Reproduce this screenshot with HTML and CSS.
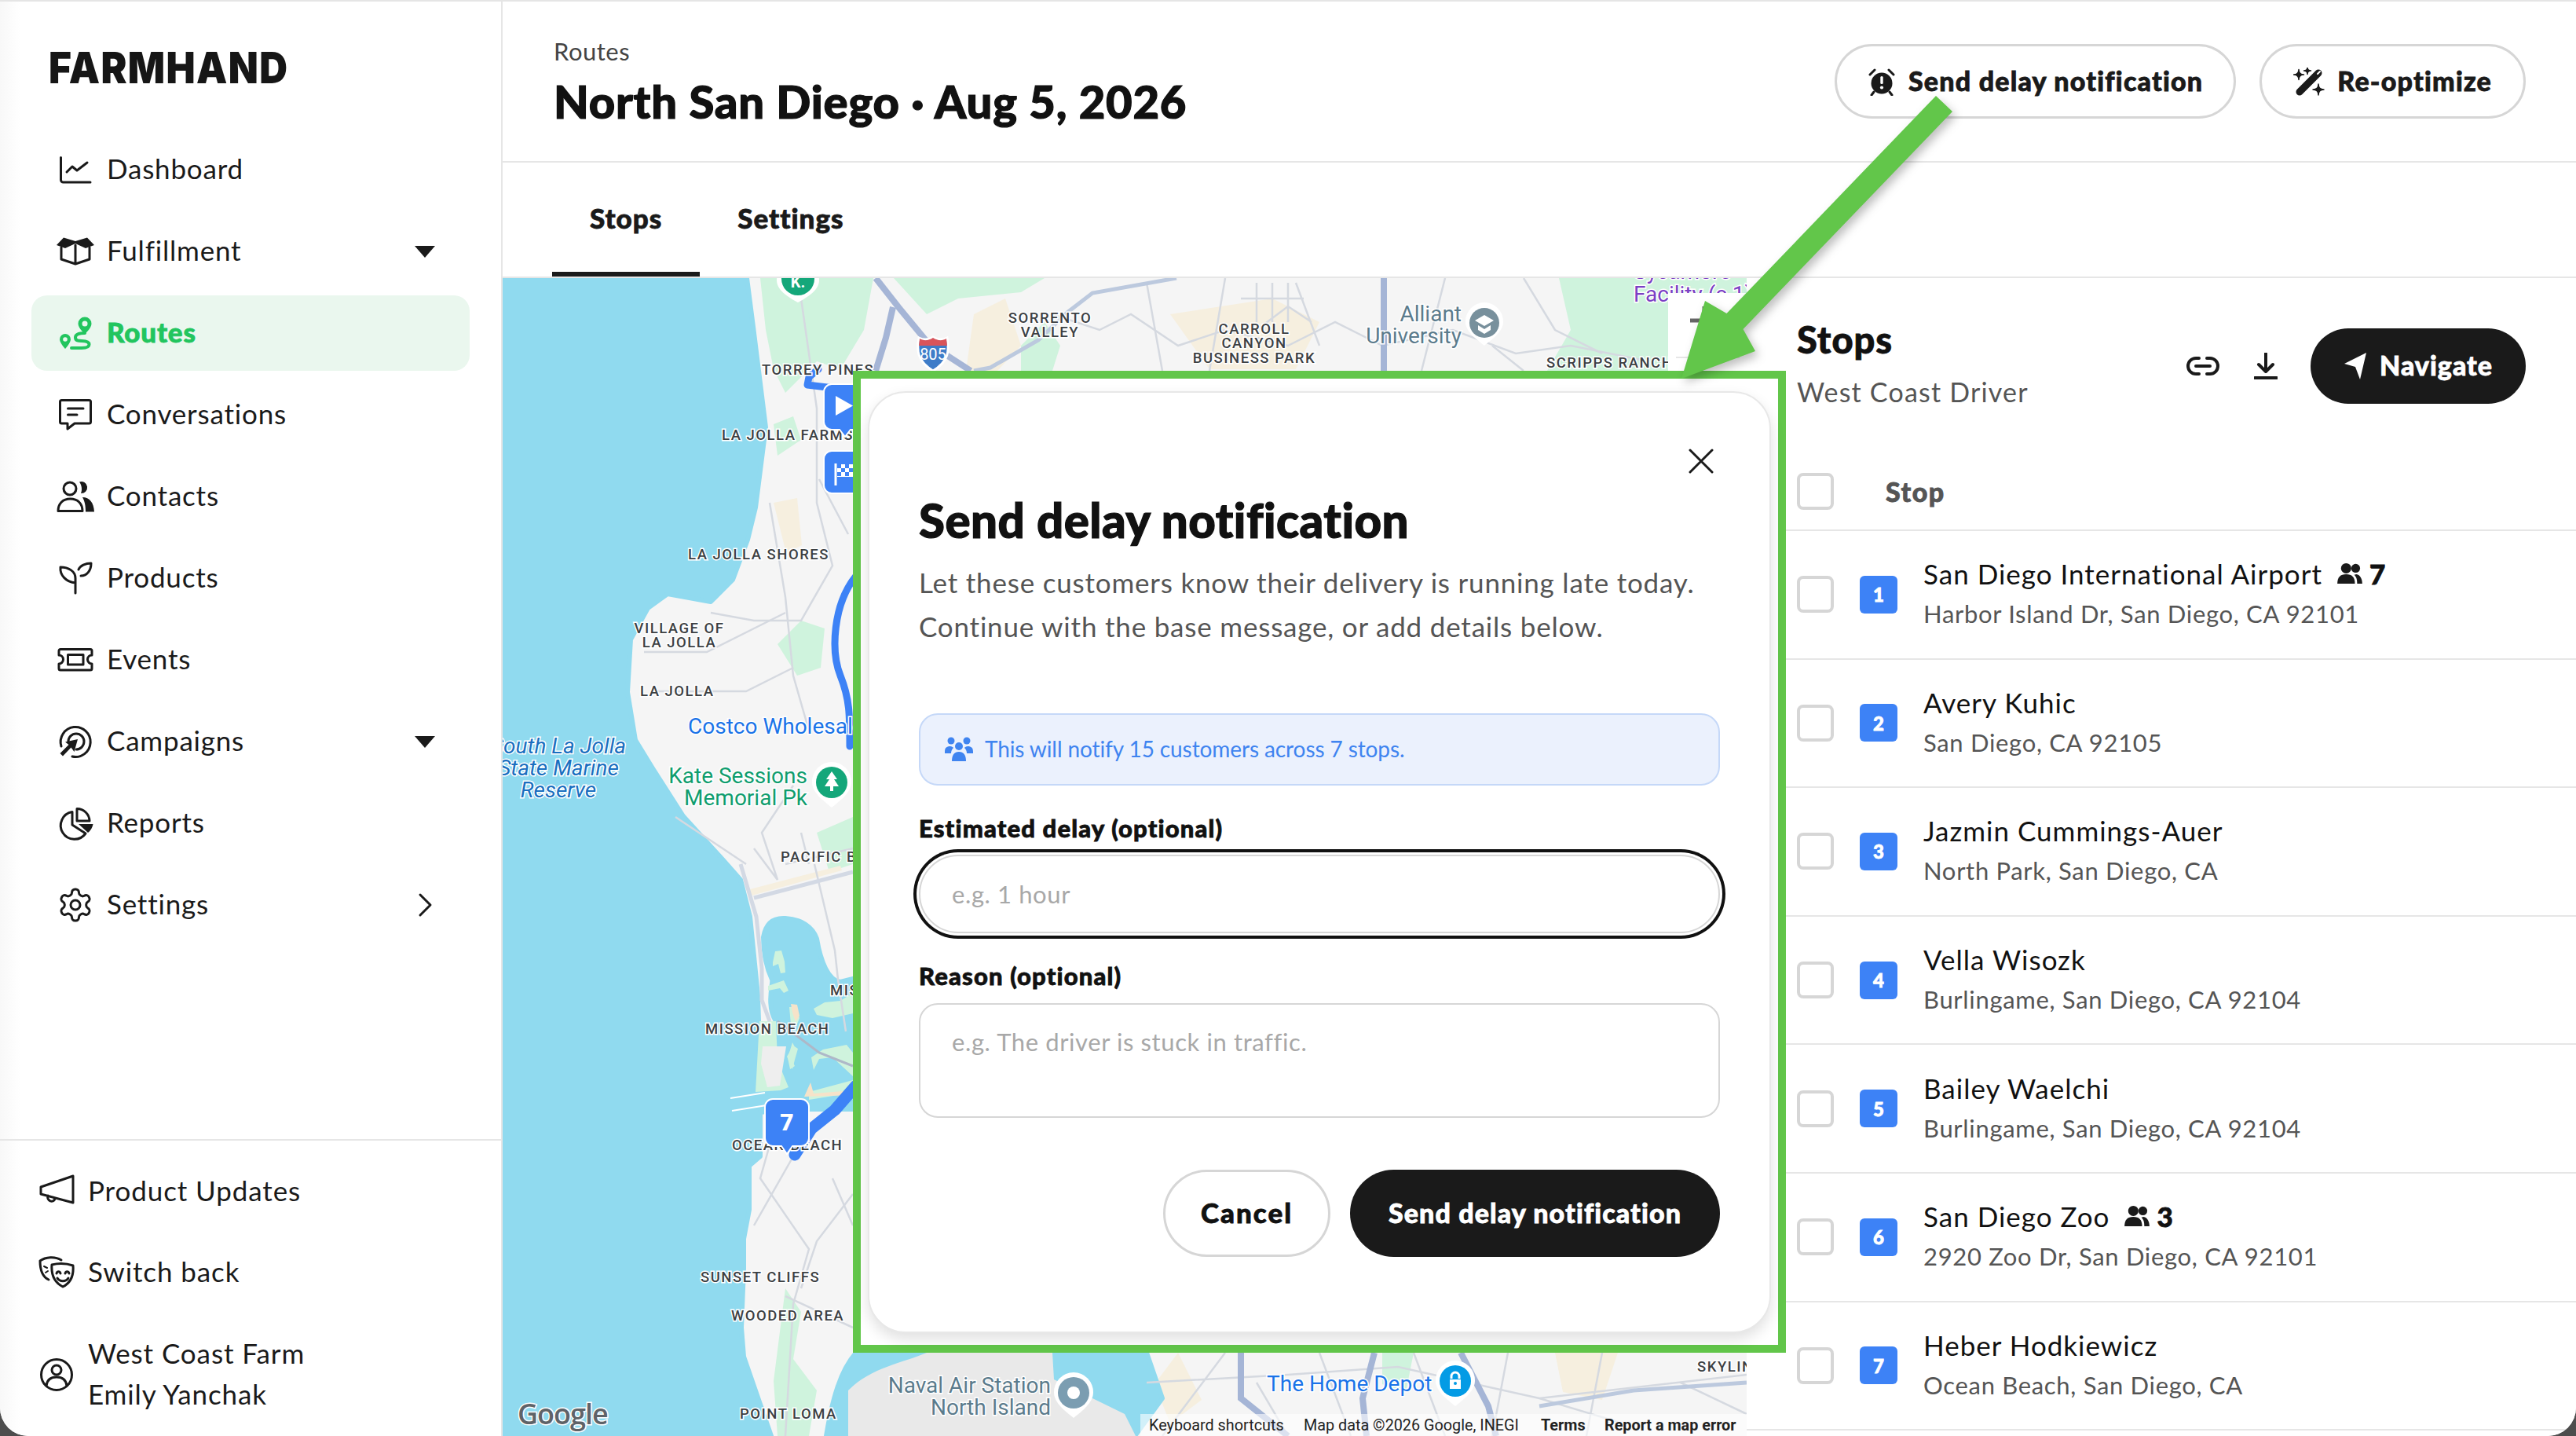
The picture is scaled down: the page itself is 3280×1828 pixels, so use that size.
FILE: index.html
```html
<!DOCTYPE html>
<html>
<head>
  <title>Farmhand - Routes</title>
  <link rel="stylesheet" href="styles.css">
</head>
<body>
<div class="app">

  <!-- sidebar -->
  <aside class="sidebar">
    <div class="logo">FARMHAND</div>
    <nav class="nav">
      <a class="nav-item">
        <svg class="icon" viewBox="0 0 48 48"><path class="st" d="M5.500 8.500V37a3 3 0 0 0 3 3H43"/><path class="st" d="M13 27l7-7 6 5 13-10"/></svg>
        <span>Dashboard</span>
      </a>
      <a class="nav-item">
        <svg class="icon" viewBox="0 0 48 48"><path class="fl" d="M0 16L9 6.500 24 11 39 6.500 48 16 37 20 24 14 11 20z"/><path class="st" d="M6 19v15l18 6 18-6V19M24 16v24"/></svg>
        <span>Fulfillment</span>
        <i class="caret"></i>
      </a>
      <a class="nav-item active">
        <svg class="icon" viewBox="0 0 48 48"><path class="gr" d="M36 3.500a8.500 8.500 0 0 1 8.500 8.500C44.500 18 36 25 36 25S27.500 18 27.500 12A8.500 8.500 0 0 1 36 3.500z"/><circle cx="36" cy="12" r="3.500" fill="#eaf7ee"/><path class="gr" d="M11 25a7 7 0 0 1 7 7c0 4.500-7 12-7 12S4 36.500 4 32a7 7 0 0 1 7-7z"/><circle cx="11" cy="32" r="2.800" fill="#eaf7ee"/><path class="gr-st" d="M36 24c-5 0-12 1-12 5.500S28 34 32 34s9.500 1 9.500 4.500S37 43 32 43H19"/></svg>
        <span>Routes</span>
      </a>
      <a class="nav-item">
        <svg class="icon" viewBox="0 0 48 48"><path class="st" d="M6.500 5.500h35a2 2 0 0 1 2 2V33a2 2 0 0 1-2 2H23l-9 7v-7H6.500a2 2 0 0 1-2-2V7.500a2 2 0 0 1 2-2z"/><path class="st" d="M14.500 16H34M14.500 24H26"/></svg>
        <span>Conversations</span>
      </a>
      <a class="nav-item">
        <svg class="icon" viewBox="0 0 48 48"><circle class="st" cx="17" cy="14" r="8"/><path class="fl" d="M29 5.500a7.500 7.500 0 1 1 2 14.500c2-4 1-11-2-14.500z"/><path class="st" d="M2 42.500C2 33 8 27 17.500 27S33 33 33 42.500z"/><path class="fl" d="M33 25c9 0 14.500 7 15 18.500H37c0-8-1-13-4-18.500z"/></svg>
        <span>Contacts</span>
      </a>
      <a class="nav-item">
        <svg class="icon" viewBox="0 0 48 48"><path class="st" d="M24 43V24C24 15 15 10 5 10 4 20 12 29 24 30"/><path class="st" d="M31 21c8 0 13-7 13-16-7 0-14 3-16 8"/></svg>
        <span>Products</span>
      </a>
      <a class="nav-item">
        <svg class="icon" viewBox="0 0 48 48"><path class="st" d="M5 10.500h38a2 2 0 0 1 2 2V18a5.500 5.500 0 0 0 0 11v6a2 2 0 0 1-2 2H5a2 2 0 0 1-2-2v-6a5.500 5.500 0 0 0 0-11v-5.500a2 2 0 0 1 2-2z"/><rect class="st" x="14.500" y="17.500" width="19.500" height="12.500"/></svg>
        <span>Events</span>
      </a>
      <a class="nav-item">
        <svg class="icon" viewBox="0 0 48 48"><path class="st" d="M6 30A19 19 0 1 1 20 43"/><path class="st" d="M15 24a10 10 0 1 1 10 10"/><path class="fl" d="M27 21l-4.500 16-4-5.500L8 42.500 4.500 39 15.500 28 11 24.500z"/></svg>
        <span>Campaigns</span>
        <i class="caret"></i>
      </a>
      <a class="nav-item">
        <svg class="icon" viewBox="0 0 48 48"><path class="st" d="M20 9.500A17.500 17.500 0 1 0 37 37L20 26z"/><path class="st" d="M26 5.500A16 16 0 0 1 42 21H26z"/><path class="fl" d="M28 25h18.500a18 18 0 0 1-6.500 11z"/></svg>
        <span>Reports</span>
      </a>
      <a class="nav-item">
        <svg class="icon" viewBox="0 0 24 24"><path class="st-s" d="M12.220 2h-.44a2 2 0 0 0-2 2v.18a2 2 0 0 1-1 1.730l-.43.25a2 2 0 0 1-2 0l-.15-.08a2 2 0 0 0-2.730.73l-.22.38a2 2 0 0 0 .73 2.730l.15.1a2 2 0 0 1 1 1.720v.51a2 2 0 0 1-1 1.740l-.15.09a2 2 0 0 0-.73 2.730l.22.38a2 2 0 0 0 2.730.73l.15-.08a2 2 0 0 1 2 0l.43.25a2 2 0 0 1 1 1.730V20a2 2 0 0 0 2 2h.44a2 2 0 0 0 2-2v-.18a2 2 0 0 1 1-1.730l.43-.25a2 2 0 0 1 2 0l.15.08a2 2 0 0 0 2.730-.73l.22-.39a2 2 0 0 0-.73-2.730l-.15-.08a2 2 0 0 1-1-1.740v-.5a2 2 0 0 1 1-1.740l.15-.09a2 2 0 0 0 .73-2.730l-.22-.38a2 2 0 0 0-2.730-.73l-.15.08a2 2 0 0 1-2 0l-.43-.25a2 2 0 0 1-1-1.730V4a2 2 0 0 0-2-2z"/><circle class="st-s" cx="12" cy="12" r="3"/></svg>
        <span>Settings</span>
        <svg class="chev" viewBox="0 0 20 32"><path class="st" d="M3 3l13 13L3 29"/></svg>
      </a>
    </nav>
    <div class="side-foot">
      <a class="foot-item">
        <svg class="icon" viewBox="0 0 48 48"><path class="st" d="M45 4v34L4 27v-9zM13 29c-2 7 7 10 9 4"/></svg>
        <span>Product Updates</span>
      </a>
      <a class="foot-item">
        <svg class="icon" viewBox="0 0 48 48"><path class="st" d="M30 8C22 3 10 4 3 9c0 10 2 20 11 24"/><path class="st" d="M18 14c8-2 18-2 27 1 1 12-3 22-13 27-10-5-15-15-14-28z"/><path class="st" d="M24 25c1-3 4-3 5 0M35 25c1-3 4-3 5 0M25 31c3 5 11 5 14 0"/><path class="st-t" d="M8 16l4 2M10 24l3-2"/></svg>
        <span>Switch back</span>
      </a>
      <a class="foot-item account">
        <svg class="icon" viewBox="0 0 48 48"><circle class="st" cx="24" cy="24" r="19.500"/><circle class="st" cx="24" cy="18" r="6"/><path class="st" d="M11 38c1-8 6-11 13-11s12 3 13 11"/></svg>
        <div class="account-text">
          <div>West Coast Farm</div>
          <div>Emily Yanchak</div>
        </div>
      </a>
    </div>
  </aside>

  <!-- main column -->
  <main class="main">
    <header class="topbar">
      <div class="page-title">
        <div class="crumb">Routes</div>
        <h1>North San Diego · Aug 5, 2026</h1>
      </div>
      <div class="top-actions">
        <button class="pill">
          <svg class="pill-icon" viewBox="0 0 36 36"><circle class="fl" cx="18" cy="20" r="13.500"/><path class="st" d="M3 9l6-6M33 9l-6-6M8 31l-3 4M28 31l3 4"/><rect x="16.300" y="11" width="3.400" height="10" rx="1.500" fill="#fff"/><circle cx="18" cy="25.500" r="2.100" fill="#fff"/></svg>
          <span>Send delay notification</span>
        </button>
        <button class="pill reopt">
          <svg class="pill-icon wide" viewBox="0 0 40 36"><path class="wand" d="M8 31L32 7"/><path d="M31 8l3-3" stroke="#fff" stroke-width="2" stroke-linecap="round"/><path class="fl" d="M7 2.500Q7 9 13.500 9 7 9 7 15.500 7 9 .5 9 7 9 7 2.500zM18-.5Q18 4 22.500 4 18 4 18 8.500 18 4 13.500 4 18 4 18-.5zM32 21Q32 28 39 28 32 28 32 35 32 28 25 28 32 28 32 21z" stroke="#1a1a1a" stroke-width="1.500" stroke-linejoin="round"/></svg>
          <span>Re-optimize</span>
        </button>
      </div>
    </header>

    <div class="tabs">
      <a class="tab current">Stops</a>
      <a class="tab">Settings</a>
    </div>

    <div class="content">
      <div class="map">
        <svg class="map-art" viewBox="640 354 1584 1474">
          <rect x="640" y="354" width="1584" height="1474" fill="#f5f5f5"/>

          <!-- parks and sand -->
          <g fill="#cff3dd">
            <path d="M968 354H1112L1100 420 1070 470 1040 460 1000 500 985 470 975 420z"/>
            <path d="M1138 354H1330L1300 372 1220 380 1180 400z"/>
            <path d="M1985 354H2224V472H1970L2000 420z"/>
            <path d="M1300 440l30-30 20 30-10 32h-40z"/>
            <path d="M990 820l30-30 30 10-5 50-30 10z"/>
            <path d="M985 540l25-10 10 30-30 20z"/>
            <path d="M1040 1060l46-20v60l-30 10z"/>
            <path d="M1000 1640l20 30-10 60 30 40-10 58h-40l-5-70z"/>
            <path d="M1760 1722h40l-10 50-30-10zM1120 1722h60l-10 20-40 6z"/>
          </g>
          <g fill="#f6efdf">
            <path d="M1490 400l130-20 60 30-30 60h-110z"/>
            <path d="M1240 400l40-20 20 60-30 32h-40z"/>
            <path d="M1980 1722h80l-20 60-50-10z"/>
            <path d="M985 640l30-6 6 60-20 10z"/>
            <path d="M1500 1722l30 60-40 30-20-50z"/>
            <path d="M955 1132L1070 1102 1072 1108 957 1140z"/>
          </g>

          <!-- water -->
          <path class="water" d="M640 354L951 354 959 416 975 544 962 646 952 687 933 738 905 766 850 756 825 774 803 814 799 881 809 942 831 978 870 1039 921 1095 943 1120 955 1167 965 1267 967 1333 962 1388 1000 1386 1000 1412 968 1416 968 1472 954 1484 954 1540 947 1577 947 1615 944 1690 947 1727 982 1828 640 1828z"/>
          <path class="water" d="M972 1193C975 1175 985 1168 1000 1169 1020 1170 1035 1180 1040 1195 1045 1225 1055 1248 1070 1250L1090 1245V1412L1000 1412 990 1388C990 1370 985 1340 988 1300 975 1280 985 1250 983 1247 975 1230 972 1210 972 1193z"/>
          <path class="water" d="M1052 1828C1060 1780 1070 1745 1090 1722H1460L1480 1780 1445 1828z"/>
          <path fill="#e9e9e9" d="M1180 1722H1340L1342 1756 1432 1800 1446 1828H1080V1770C1110 1740 1150 1735 1180 1722z"/>

          <!-- mission bay islands -->
          <g fill="#cff3dd">
            <path d="M967 1300L988 1300 990 1350 1004 1384 994 1388 962 1390z"/>
            <path d="M984 1225l3-14 8-1 4 14 1 14-6 1-3-12-7 3z"/>
            <path d="M978 1255l20-7 6 13-6 3-5-6-15 3z"/>
            <path d="M1009 1327l4 8-5 14 4 8-6 4-3-14z"/>
            <path d="M1002 1345l8-14 6 4-4 14-3 12z"/>
            <path d="M1033 1346l15-10 30-6 8 10v30L1060 1346 1043 1348 1036 1362z"/>
            <path d="M1036 1284l14-8 20-2 16-10V1290L1060 1296 1040 1292z"/>
            <path d="M1030 1390l56-15v16L1030 1400z"/>
            <path d="M1005 1282l9 0 4 14-4 10-7-2z"/>
          </g>
          <path d="M1007 1278l8 1 3 14-5 8-4-12z" fill="#f6e3c9"/>
          <path d="M1024 1396l8-18 4 14 50-4v6z" fill="#f6e3c9"/>
          <path d="M971 1332h30l-8 50-16 2-8-30z" fill="#eee"/>
          <path d="M930 1398l44-7M932 1414l44-7" stroke="#fff" stroke-width="2"/>

          <!-- roads -->
          <g class="roads">
            <path d="M1020 380L1040 520V640L1060 720 1020 790 960 790 905 780"/>
            <path d="M1043 610L1080 680M820 830L900 830 1000 780M829 880L950 880 1010 850"/>
            <path d="M980 640L1000 760 1010 860 1030 930M1000 1100L1086 1080M860 1040L950 1100"/>
            <path d="M1010 1000L970 1060 990 1120 960 1080M1030 1100L1020 1060"/>
            <path d="M985 1440L968 1500 1030 1590 1010 1660 1000 1828M1010 1472L960 1560M1086 1520L1040 1580 1020 1640"/>
            <path d="M1000 1650L1086 1690M1060 1500L1086 1560"/>
            <path d="M1037 1100L1063 1210 1067 1247 1077 1313"/>
            <path d="M1340 400L1400 420 1440 400 1500 440 1560 420 1640 440 1700 410 1760 440 1850 420 1930 450 2000 440 2100 460"/>
            <path d="M1460 360L1480 472M1560 354L1540 472M1650 360L1680 440M1840 354L1810 472M1900 440L1940 472M1940 354L1980 420 2040 450M1600 420l40-30 30 20M1580 380h80M1600 360v50M1620 360v50M1640 360v50"/>
            <path d="M1460 1760L1640 1750 1780 1740 1960 1780 2224 1750M1480 1828L1560 1722M1680 1722L1720 1828M1800 1722L1840 1828M1920 1722L1900 1828M2040 1722L2020 1828M2140 1760L2224 1800M1600 1760L1640 1828M1960 1780L2060 1810"/>
          </g>
          <path class="coast-road" d="M943 1100L963 1167 970 1233 970 1273 980 1300M960 1143L1086 1110"/>
          <path class="coast-road thin" d="M990 1300L1043 1340 1086 1357"/>
          <g class="highway">
            <path d="M1115 354L1144 391 1182 437 1236 472"/>
            <path d="M1137 391L1128 430 1115 472"/>
            <path d="M1762 354V472"/>
            <path d="M1580 1722L1580 1780 1640 1828"/>
            <path d="M1750 1722L1735 1780 1740 1828M1860 1722L1895 1790 1905 1828"/>
          </g>
          <path class="road-mid" d="M1498 354L1391 373 1360 397 1322 433 1261 468 1240 472"/>
          <path class="road-mid" d="M2224 1760L2080 1770 1960 1790"/>

          <!-- route line -->
          <g class="route">
            <path d="M1042 470L1030 480 1028 490 1070 495 1090 500" stroke-width="9"/>
            <path d="M1090 733C1060 770 1058 830 1070 860 1082 890 1082 910 1082 950" stroke-width="9"/>
            <path d="M1090 1382L1063 1413 1033 1437 1012 1470" stroke-width="15"/>
          </g>

          <!-- shield and pois -->
          <path d="M1170 430c6 3 12 3 18-1 6 4 12 4 18 1 3 16 2 30-18 42-20-12-21-26-18-42z" fill="#3e7cc8" stroke="#fff" stroke-width="3"/>
          <path d="M1171 431c5 3 11 3 17-1 6 4 12 4 17 1l1 9h-36z" fill="#d9545a"/>
          <text class="shield" x="1188" y="458">805</text>

          <g>
            <path class="poi-halo" d="M1016 330a27 27 0 0 1 27 27c0 14-20 24-27 28-7-4-27-14-27-28a27 27 0 0 1 27-27z"/>
            <circle cx="1016" cy="355" r="21" fill="#14a77a"/>
            <text class="pin-k" x="1016" y="366">K.</text>
            <path class="poi-halo" d="M1059 970a25 25 0 0 1 25 26c0 14-18 26-25 32-7-6-25-18-25-32a25 25 0 0 1 25-26z"/>
            <circle cx="1059" cy="996" r="20" fill="#14a77a"/>
            <path d="M1059 982l-7 10h4l-6 9h7v6h4v-6h7l-6-9h4z" fill="#fff"/>
            <path class="poi-halo" d="M1890 385a24 24 0 0 1 24 25c0 13-17 24-24 30-7-6-24-17-24-30a24 24 0 0 1 24-25z"/>
            <circle cx="1890" cy="411" r="19" fill="#78909c"/>
            <path d="M1878 408l12-7 12 7-12 7zM1882 414l8 5 8-5v6l-8 5-8-5z" fill="#fff"/>
            <path class="poi-halo" d="M1367 1747a25 25 0 0 1 25 26c0 14-18 26-25 32-7-6-25-18-25-32a25 25 0 0 1 25-26z"/>
            <circle cx="1367" cy="1773" r="20" fill="#7b9db1"/>
            <circle cx="1367" cy="1773" r="8" fill="#fff"/>
            <path class="poi-halo" d="M1853 1732a25 25 0 0 1 25 26c0 14-18 26-25 32-7-6-25-18-25-32a25 25 0 0 1 25-26z"/>
            <circle cx="1853" cy="1758" r="20" fill="#039be5"/>
            <path d="M1848 1755v-3a5 5 0 0 1 10 0v3" fill="none" stroke="#fff" stroke-width="3"/>
            <path d="M1846 1756h14v12h-14z" fill="#fff"/>
            <circle cx="1853" cy="1761" r="2" fill="#039be5"/>
          </g>

          <!-- place names -->
          <g class="area">
            <text x="1337" y="406" text-anchor="middle">SORRENTO</text>
            <text x="1337" y="424" text-anchor="middle">VALLEY</text>
            <text x="1597" y="420" text-anchor="middle">CARROLL</text>
            <text x="1597" y="438" text-anchor="middle">CANYON</text>
            <text x="1597" y="457" text-anchor="middle">BUSINESS PARK</text>
            <text x="1969" y="463">SCRIPPS RANCH</text>
            <text x="970" y="472">TORREY PINES</text>
            <text x="919" y="555">LA JOLLA FARMS</text>
            <text x="876" y="707">LA JOLLA SHORES</text>
            <text x="865" y="801" text-anchor="middle">VILLAGE OF</text>
            <text x="865" y="819" text-anchor="middle">LA JOLLA</text>
            <text x="815" y="881">LA JOLLA</text>
            <text x="994" y="1092">PACIFIC BEACH</text>
            <text x="1057" y="1262">MISSION BAY</text>
            <text x="898" y="1311">MISSION BEACH</text>
            <text x="932" y="1459">OCEAN BEACH</text>
            <text x="892" y="1627">SUNSET CLIFFS</text>
            <text x="931" y="1676">WOODED AREA</text>
            <text x="942" y="1801">POINT LOMA</text>
            <text x="2161" y="1741">SKYLINE</text>
          </g>
          <g class="poi-text">
            <text class="purple" x="2080" y="348">Sycamore</text>
            <text class="purple" x="2080" y="377">Facility (c 1)</text>
            <text class="slate" x="1861" y="402" text-anchor="end">Alliant</text>
            <text class="slate" x="1861" y="430" text-anchor="end">University</text>
            <text class="blue" x="876" y="927">Costco Wholesale</text>
            <text class="reserve" x="711" y="952" text-anchor="middle">South La Jolla</text>
            <text class="reserve" x="711" y="980" text-anchor="middle">State Marine</text>
            <text class="reserve" x="711" y="1008" text-anchor="middle">Reserve</text>
            <text class="park" x="1028" y="990" text-anchor="end">Kate Sessions</text>
            <text class="park" x="1028" y="1018" text-anchor="end">Memorial Pk</text>
            <text class="slate" x="1338" y="1766" text-anchor="end">Naval Air Station</text>
            <text class="slate" x="1338" y="1794" text-anchor="end">North Island</text>
            <text class="blue" x="1613" y="1764">The Home Depot</text>
          </g>

          <!-- stop pins -->
          <g class="stop-pin">
            <path d="M1059 489h34a10 10 0 0 1 10 10v38a10 10 0 0 1-10 10h-10l-7 9-7-9h-10a10 10 0 0 1-10-10v-38a10 10 0 0 1 10-10z"/>
            <path d="M1059 574h34a10 10 0 0 1 10 10v34a10 10 0 0 1-10 10h-34a10 10 0 0 1-10-10v-34a10 10 0 0 1 10-10z"/>
            <path d="M984 1399h36a10 10 0 0 1 10 10v40a10 10 0 0 1-10 10h-11l-7 10-7-10h-11a10 10 0 0 1-10-10v-40a10 10 0 0 1 10-10z"/>
          </g>
          <path d="M1064 504l22 12.500-22 12.500z" fill="#fff"/>
          <path d="M1064 590v28" stroke="#fff" stroke-width="3"/>
          <rect x="1066" y="591" width="20" height="16" fill="#fff"/>
          <path d="M1066 591h5v5h-5zM1076 591h5v5h-5zM1071 596h5v5h-5zM1081 596h5v5h-5zM1066 601h5v5h-5zM1076 601h5v5h-5z" fill="#3d82f6"/>
          <text class="pin-num" x="1002" y="1439">7</text>

          <!-- attribution -->
          <text class="google" x="659" y="1813">Google</text>
          <rect x="1452" y="1800" width="772" height="28" fill="#fff" opacity="0.6"/>
          <g class="attrib">
            <text x="1463" y="1821">Keyboard shortcuts</text>
            <text x="1660" y="1821">Map data ©2026 Google, INEGI</text>
            <text class="b" x="1962" y="1821">Terms</text>
            <text class="b" x="2043" y="1821">Report a map error</text>
          </g>

          
          <rect x="2124" y="373" width="101" height="110" fill="#fff"/>
          <path d="M2152 408h36M2170 390v36" stroke="#666" stroke-width="5"/>
          <path d="M2134 455h81" stroke="#e6e6e6" stroke-width="2"/>
        </svg>
      </div>

      <section class="panel">
        <div class="panel-head">
          <div>
            <h2>Stops</h2>
            <div class="driver">West Coast Driver</div>
          </div>
          <div class="panel-tools">
            <svg class="tool-link" viewBox="0 0 44 26"><path class="st-b" d="M17 3H13a10 10 0 0 0 0 20h4M27 3h4a10 10 0 0 1 0 20h-4M13 13h18"/></svg>
            <svg class="tool-down" viewBox="0 0 30 34"><path class="st-b" d="M15 1v22M6 15l9 9 9-9"/><path class="st-b" d="M1 32h28"/></svg>
            <button class="nav-btn">
              <svg class="nav-arrow" viewBox="0 0 30 36"><path d="M29 1L21 35 15 19 1 15z" fill="#fff"/></svg>
              <span>Navigate</span>
            </button>
          </div>
        </div>

        <div class="stops-head">
          <span class="check"></span>
          <span class="stops-col">Stop</span>
        </div>

        <div class="stop">
          <span class="check"></span>
          <span class="num">1</span>
          <div class="stop-text">
            <div class="stop-name">San Diego International Airport
              <span class="count">
                <svg viewBox="0 0 36 30"><circle class="fl" cx="13" cy="8" r="7"/><circle class="fl" cx="26" cy="8" r="6"/><path class="fl" d="M1 29c0-9 4-13 12-13s12 4 12 13z"/><path class="fl" d="M27 16c5 1 8 6 8 13h-7c0-6-1-9-4-12z"/></svg>7
              </span>
            </div>
            <div class="stop-addr">Harbor Island Dr, San Diego, CA 92101</div>
          </div>
        </div>
        <div class="stop">
          <span class="check"></span>
          <span class="num">2</span>
          <div class="stop-text">
            <div class="stop-name">Avery Kuhic</div>
            <div class="stop-addr">San Diego, CA 92105</div>
          </div>
        </div>
        <div class="stop">
          <span class="check"></span>
          <span class="num">3</span>
          <div class="stop-text">
            <div class="stop-name">Jazmin Cummings-Auer</div>
            <div class="stop-addr">North Park, San Diego, CA</div>
          </div>
        </div>
        <div class="stop">
          <span class="check"></span>
          <span class="num">4</span>
          <div class="stop-text">
            <div class="stop-name">Vella Wisozk</div>
            <div class="stop-addr">Burlingame, San Diego, CA 92104</div>
          </div>
        </div>
        <div class="stop">
          <span class="check"></span>
          <span class="num">5</span>
          <div class="stop-text">
            <div class="stop-name">Bailey Waelchi</div>
            <div class="stop-addr">Burlingame, San Diego, CA 92104</div>
          </div>
        </div>
        <div class="stop">
          <span class="check"></span>
          <span class="num">6</span>
          <div class="stop-text">
            <div class="stop-name">San Diego Zoo
              <span class="count">
                <svg viewBox="0 0 36 30"><circle class="fl" cx="13" cy="8" r="7"/><circle class="fl" cx="26" cy="8" r="6"/><path class="fl" d="M1 29c0-9 4-13 12-13s12 4 12 13z"/><path class="fl" d="M27 16c5 1 8 6 8 13h-7c0-6-1-9-4-12z"/></svg>3
              </span>
            </div>
            <div class="stop-addr">2920 Zoo Dr, San Diego, CA 92101</div>
          </div>
        </div>
        <div class="stop">
          <span class="check"></span>
          <span class="num">7</span>
          <div class="stop-text">
            <div class="stop-name">Heber Hodkiewicz</div>
            <div class="stop-addr">Ocean Beach, San Diego, CA</div>
          </div>
        </div>
      </section>
    </div>
  </main>

  <!-- dialog with the green callout round it -->
  <div class="callout">
    <div class="modal">
      <svg class="modal-close" viewBox="0 0 32 32"><path class="st" d="M2 2l28 28M30 2L2 30"/></svg>
      <h3>Send delay notification</h3>
      <p class="modal-text">Let these customers know their delivery is running late today.<br>Continue with the base message, or add details below.</p>
      <div class="notice">
        <svg viewBox="0 0 38 32"><g fill="#3f84f0"><circle cx="9" cy="5" r="4.500"/><circle cx="29" cy="5" r="4.500"/><circle cx="19" cy="12" r="5"/><path d="M1 19c0-5 2-7 7-7 2 0 3 1 4 2-2 2-3 4-3 7H1zM37 19c0-5-2-7-7-7-2 0-3 1-4 2 2 2 3 4 3 7h8zM10 31c0-8 3-12 9-12s9 4 9 12z"/></g></svg>
        <span>This will notify 15 customers across 7 stops.</span>
      </div>
      <label class="field-label">Estimated delay (optional)</label>
      <input class="field-input" type="text" placeholder="e.g. 1 hour">
      <label class="field-label">Reason (optional)</label>
      <textarea class="field-area" placeholder="e.g. The driver is stuck in traffic."></textarea>
      <div class="modal-actions">
        <button class="btn-cancel">Cancel</button>
        <button class="btn-send">Send delay notification</button>
      </div>
    </div>
  </div>

  <!-- annotation arrow -->
  <svg class="arrow" viewBox="0 0 3280 1828">
    <path d="M2465 122L2486 142 2219.500 419 2235 447 2141 482 2171 383 2198.500 399z" fill="#62c64a"/>
  </svg>
</div>
</body>
</html>
```

FILE: styles.css
```css
/* base */
html {
  background: #4d4d4d;
}

body {
  margin: 0;
  font-family: "Lato", "Liberation Sans", sans-serif;
  color: #1a1a1a;
}

.app {
  position: relative;
  display: flex;
  width: 3280px;
  height: 1828px;
  box-sizing: border-box;
  border-top: 2px solid #e5e5e5;
  border-radius: 0 0 36px 36px;
  background: #fff;
  overflow: hidden;
}

button {
  font-family: inherit;
  cursor: pointer;
}

/* all the heavy labels, the face only goes up to bold so thicken it a bit */
h1, h2, h3,
.nav-item.active,
.pill,
.tab,
.nav-btn,
.stops-col,
.count,
.num,
.field-label,
.btn-cancel,
.btn-send {
  font-weight: 900;
  -webkit-text-stroke: 0.8px currentColor;
}

/* svg paint helpers */
.st { fill: none; stroke: #1a1a1a; stroke-width: 3; stroke-linecap: round; stroke-linejoin: round; }
.st-s { fill: none; stroke: #1a1a1a; stroke-width: 1.5; stroke-linecap: round; stroke-linejoin: round; }
.st-t { fill: none; stroke: #1a1a1a; stroke-width: 2; stroke-linecap: round; }
.st-b { fill: none; stroke: #1a1a1a; stroke-width: 4; stroke-linecap: round; stroke-linejoin: round; }
.fl { fill: #1a1a1a; }
.gr { fill: #22c55e; }
.gr-st { fill: none; stroke: #22c55e; stroke-width: 4; stroke-linecap: round; }
.wand { fill: none; stroke: #1a1a1a; stroke-width: 9; stroke-linecap: round; }

/* sidebar */
.sidebar {
  flex: none;
  display: flex;
  flex-direction: column;
  width: 640px;
  box-sizing: border-box;
  border-right: 2px solid #e6e6e6;
  background: linear-gradient(90deg, #f8f8f8, #fff 26px);
}

.logo {
  margin: 49px 0 0 62px;
  height: 70px;
  font-family: "Inter", "Liberation Sans", sans-serif;
  font-weight: 900;
  font-size: 55px;
  line-height: 70px;
  letter-spacing: 1.500px;
  color: #161616;
  transform: scaleX(0.9);
  transform-origin: left center;
}

.nav {
  display: flex;
  flex-direction: column;
  gap: 8px;
  margin: 47px 40px 0 40px;
}

.nav-item {
  display: flex;
  align-items: center;
  gap: 16px;
  height: 96px;
  padding: 0 32px;
  border-radius: 20px;
  font-size: 35px;
  letter-spacing: 0.800px;
}

.nav-item span {
  margin-bottom: 4px;
}

.nav-item.active {
  background: #eaf7ee;
  color: #22c55e;
}

.icon {
  flex: none;
  width: 48px;
  height: 48px;
}

.caret {
  margin-left: auto;
  margin-right: 12px;
  width: 0;
  height: 0;
  border-left: 13px solid transparent;
  border-right: 13px solid transparent;
  border-top: 15px solid #1a1a1a;
}

.chev {
  margin-left: auto;
  margin-right: 14px;
  width: 20px;
  height: 32px;
}

.side-foot {
  margin-top: auto;
  padding: 13px 0 13px 48px;
  border-top: 2px solid #e6e6e6;
}

.foot-item {
  display: flex;
  align-items: center;
  gap: 16px;
  height: 103px;
  font-size: 35px;
  letter-spacing: 0.900px;
}

.foot-item span,
.account-text {
  margin-bottom: 4px;
}

.foot-item.account {
  height: 130px;
  margin-top: 14px;
}

.account-text {
  line-height: 52px;
}

/* top bar */
.main {
  flex: 1;
  display: flex;
  flex-direction: column;
  min-width: 0;
}

.topbar {
  flex: none;
  display: flex;
  justify-content: space-between;
  height: 205px;
  box-sizing: border-box;
  border-bottom: 2px solid #e6e6e6;
  padding-right: 64px;
}

.page-title {
  padding: 45px 0 0 65px;
}

.crumb {
  font-size: 31px;
  line-height: 36px;
  letter-spacing: 0.500px;
  color: #444;
}

h1 {
  margin: 10px 0 0;
  font-size: 58px;
  line-height: 72px;
  letter-spacing: 0.750px;
  -webkit-text-stroke-width: 1.200px;
  color: #111;
}

.top-actions {
  display: flex;
  gap: 30px;
  padding-top: 54px;
}

.pill {
  display: flex;
  align-items: center;
  gap: 16px;
  height: 95px;
  padding: 0 39px;
  border: 3px solid #d6d6d6;
  border-radius: 48px;
  background: #fff;
  color: #1a1a1a;
  font-size: 34px;
  letter-spacing: 1.200px;
}

.pill.reopt {
  padding: 0 40px;
}

.pill span {
  margin-bottom: 3px;
}

.pill-icon {
  width: 36px;
  height: 36px;
}

.pill-icon.wide {
  width: 40px;
}

/* tabs */
.tabs {
  flex: none;
  display: flex;
  height: 147px;
  box-sizing: border-box;
  border-bottom: 2px solid #e6e6e6;
  padding-left: 63px;
}

.tab {
  display: flex;
  align-items: center;
  height: 145px;
  box-sizing: border-box;
  padding: 0 48px;
  font-size: 35px;
  letter-spacing: 1px;
  border-bottom: 6px solid transparent;
}

.tab.current {
  border-bottom-color: #1a1a1a;
}

/* map */
.content {
  flex: 1;
  display: flex;
  min-height: 0;
}

.map {
  flex: none;
  width: 1584px;
}

.map-art {
  display: block;
  width: 1584px;
  height: 1474px;
}

.water { fill: #90daef; stroke: #90daef; stroke-width: 6; stroke-linejoin: round; }
.roads { fill: none; stroke: #d5d9e0; stroke-width: 2.500; }
.coast-road { fill: none; stroke: #d3d9e4; stroke-width: 5; }
.coast-road.thin { stroke: #aeb8c8; stroke-width: 3; }
.highway { fill: none; stroke: #a5b5d6; stroke-width: 8; }
.road-mid { fill: none; stroke: #bcc9de; stroke-width: 5; }
.route { fill: none; stroke: #3d82f6; stroke-linecap: round; stroke-linejoin: round; }
.poi-halo { fill: #fff; }
.stop-pin path { fill: #3d82f6; stroke: #fff; stroke-width: 2; }

.area text {
  font-family: "Roboto", sans-serif;
  font-size: 18.500px;
  font-weight: 500;
  letter-spacing: 1.500px;
  dominant-baseline: middle;
  fill: #3c4043;
  stroke: #fff;
  stroke-width: 3px;
  paint-order: stroke;
}

.poi-text text {
  font-family: "Roboto", sans-serif;
  font-size: 28px;
  dominant-baseline: middle;
  stroke: #fff;
  stroke-width: 3px;
  paint-order: stroke;
}

.poi-text .purple { fill: #7b3fc4; }
.poi-text .slate { fill: #5b7b8c; }
.poi-text .blue { fill: #1a73e8; }
.poi-text .park { fill: #0f9d6e; }
.poi-text .reserve { fill: #1a6fc0; font-style: italic; }

.shield {
  font-family: "Roboto", sans-serif;
  font-size: 20px;
  fill: #fff;
  text-anchor: middle;
}

.pin-num {
  font-family: "Roboto", sans-serif;
  font-size: 30px;
  font-weight: 900;
  fill: #fff;
  text-anchor: middle;
}

.pin-k {
  font-family: "Roboto", sans-serif;
  font-size: 20px;
  font-weight: 700;
  fill: #fff;
  text-anchor: middle;
}

.google {
  font-family: "Open Sans", sans-serif;
  font-size: 36px;
  font-weight: 600;
  letter-spacing: -1px;
  fill: #5f6368;
  stroke: #fff;
  stroke-width: 3px;
  paint-order: stroke;
}

.attrib text {
  font-family: "Roboto", sans-serif;
  font-size: 19.800px;
  fill: #222;
}

.attrib .b {
  font-weight: 700;
}

/* stops panel */
.panel {
  flex: 1;
  min-width: 0;
  background: #fff;
}

.panel-head {
  display: flex;
  justify-content: space-between;
  height: 222px;
  box-sizing: border-box;
  padding: 52px 64px 0 64px;
}

h2 {
  margin: 0;
  font-size: 47px;
  line-height: 52px;
  letter-spacing: 1px;
  color: #111;
}

.driver {
  margin-top: 21px;
  font-size: 34px;
  line-height: 40px;
  letter-spacing: 1.200px;
  color: #555;
}

.panel-tools {
  display: flex;
  align-items: center;
  height: 96px;
  margin-top: 12px;
}

.tool-link {
  width: 44px;
  height: 26px;
  margin-right: 43px;
}

.tool-down {
  width: 30px;
  height: 34px;
  margin-right: 42px;
}

.nav-btn {
  display: flex;
  align-items: center;
  justify-content: center;
  gap: 16px;
  width: 274px;
  height: 96px;
  border: none;
  border-radius: 48px;
  background: #1a1a1a;
  color: #fff;
  font-size: 34px;
  letter-spacing: 1px;
}

.nav-btn span {
  margin-bottom: 3px;
}

.nav-arrow {
  width: 30px;
  height: 36px;
}

.stops-head {
  display: flex;
  align-items: center;
  height: 100px;
  box-sizing: border-box;
  border-bottom: 2px solid #e6e6e6;
  padding-left: 64px;
}

.stops-col {
  margin-left: 66px;
  font-size: 34px;
  letter-spacing: 1.500px;
  color: #555;
}

.check {
  flex: none;
  width: 47px;
  height: 47px;
  box-sizing: border-box;
  border: 4px solid #d6d6d6;
  border-radius: 8px;
  background: #fff;
}

.stop {
  display: flex;
  align-items: center;
  gap: 33px;
  height: 163.600px;
  box-sizing: border-box;
  border-bottom: 2px solid #e6e6e6;
  padding-left: 64px;
}

.num {
  flex: none;
  display: flex;
  align-items: center;
  justify-content: center;
  width: 48px;
  height: 48px;
  border-radius: 6px;
  background: #3d82f6;
  color: #fff;
  font-size: 24px;
}

.stop-text {
  margin-bottom: 2px;
}

.stop-name {
  display: flex;
  align-items: center;
  gap: 18px;
  font-size: 35px;
  line-height: 48px;
  letter-spacing: 1px;
  color: #111;
}

.stop-addr {
  margin-top: 3px;
  font-size: 31px;
  line-height: 48px;
  letter-spacing: 0.680px;
  color: #555;
}

.count {
  display: flex;
  align-items: center;
  gap: 8px;
}

.count svg {
  width: 34px;
  height: 28px;
}

/* dialog */
.callout {
  position: absolute;
  left: 1086px;
  top: 470px;
  width: 1188px;
  height: 1250px;
  box-sizing: border-box;
  border: 10px solid #62c64a;
  padding: 16px 9px;
  background: #fff;
}

.modal {
  display: flex;
  flex-direction: column;
  height: 1199px;
  box-sizing: border-box;
  border: 2px solid #e8e8e8;
  border-radius: 48px;
  padding: 71px 63px 0 63px;
  background: #fff;
  box-shadow: 0 8px 18px rgba(0, 0, 0, 0.12);
}

.modal-close {
  align-self: flex-end;
  width: 32px;
  height: 32px;
  margin-right: 8px;
}

h3 {
  margin: 23px 0 0;
  font-size: 60px;
  line-height: 72px;
  letter-spacing: 0.450px;
  -webkit-text-stroke-width: 1.200px;
  color: #111;
}

.modal-text {
  margin: 15px 0 0;
  font-size: 35px;
  line-height: 56px;
  letter-spacing: 0.800px;
  color: #555;
}

.notice {
  display: flex;
  align-items: center;
  gap: 14px;
  height: 92px;
  margin-top: 83px;
  box-sizing: border-box;
  padding-left: 30px;
  border: 2px solid #c5d8f8;
  border-radius: 24px;
  background: #ebf1fd;
  color: #3f84f0;
  font-size: 28px;
  letter-spacing: -0.100px;
}

.notice span {
  margin-bottom: 3px;
}

.notice svg {
  width: 38px;
  height: 32px;
}

.field-label {
  display: block;
  margin-top: 34px;
  font-size: 31px;
  line-height: 40px;
  letter-spacing: 1.150px;
  color: #111;
}

.field-input,
.field-area {
  display: block;
  width: 100%;
  box-sizing: border-box;
  border: 2px solid #d6d6d6;
  background: #fff;
  font-family: inherit;
  font-size: 31px;
  letter-spacing: 0.600px;
  outline: none;
}

.field-input::placeholder,
.field-area::placeholder {
  color: #a8a8a8;
  opacity: 1;
}

.field-input {
  height: 100px;
  margin-top: 14px;
  padding: 0 40px;
  border-radius: 50px;
  box-shadow: 0 0 0 3px #fff, 0 0 0 7px #111;
}

.field-area {
  height: 146px;
  margin-top: 15px;
  padding: 28px 40px;
  border-radius: 24px;
  resize: none;
}

.modal-actions {
  display: flex;
  justify-content: flex-end;
  gap: 25px;
  margin-top: 66px;
}

.btn-cancel,
.btn-send {
  height: 111px;
  padding-bottom: 4px;
  border-radius: 56px;
  font-size: 34px;
  letter-spacing: 1.100px;
}

.btn-cancel {
  width: 213px;
  border: 3px solid #d6d6d6;
  background: #fff;
  color: #111;
  font-size: 35px;
  letter-spacing: 2px;
}

.btn-send {
  width: 471px;
  border: none;
  background: #1a1a1a;
  color: #fff;
}

/* annotation arrow */
.arrow {
  position: absolute;
  left: 0;
  top: -2px;
  width: 3280px;
  height: 1828px;
  filter: drop-shadow(4px 6px 6px rgba(0, 0, 0, 0.25));
  pointer-events: none;
}
```
